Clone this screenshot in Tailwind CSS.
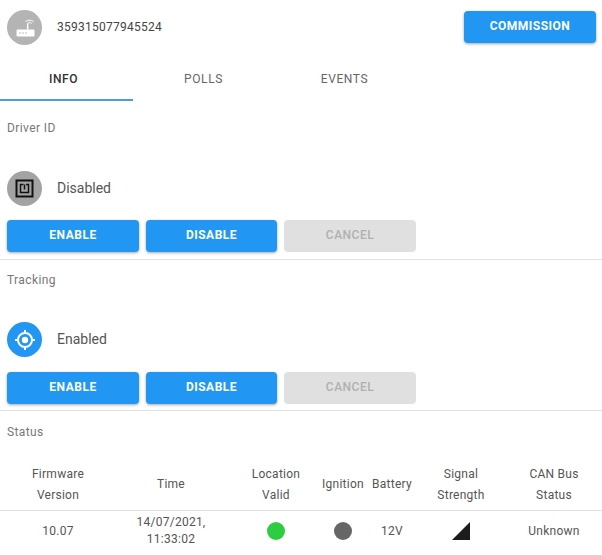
<!DOCTYPE html>
<html lang="en">
<head>
    <meta charset="UTF-8">
    <title>Device</title>
    <script src="https://cdn.jsdelivr.net/npm/@tailwindcss/browser@4"></script>
</head>
<body class="bg-white font-['Roboto',sans-serif] text-[12px] text-[#444] w-[602px] h-[555px] overflow-hidden">
    <!-- header -->
    <div class="flex items-center justify-between h-[54px] pl-[7px] pr-[6px]">
        <div class="flex items-center gap-[15px]">
            <div class="w-[35px] h-[35px] rounded-full bg-[#b4b4b4] flex items-center justify-center">
                <svg width="22" height="22" viewBox="0 0 22 22" fill="none">
                    <path d="M11.5 5.5a5.5 4 0 0 1 8 0" stroke="#fff" stroke-width="1"/>
                    <path d="M13.3 7.3a3 2.2 0 0 1 4.4 0" stroke="#fff" stroke-width="1"/>
                    <rect x="13" y="7.5" width="1.4" height="6" fill="#fff"/>
                    <rect x="2.5" y="13.5" width="18" height="7" rx="1.2" fill="#fff"/>
                    <circle cx="6" cy="17" r=".8" fill="#b4b4b4"/>
                    <circle cx="9" cy="17" r=".8" fill="#b4b4b4"/>
                    <circle cx="12" cy="17" r=".8" fill="#b4b4b4"/>
                </svg>
            </div>
            <span class="text-[12px] tracking-[0.25px]">359315077945524</span>
        </div>
        <button class="w-[132px] h-[32px] pb-[2px] rounded bg-[#2196f3] text-white text-[12px] font-bold tracking-[0.5px] shadow-[0_1px_3px_rgba(0,0,0,0.35)]">COMMISSION</button>
    </div>

    <!-- tabs -->
    <div class="flex h-[47px] pt-[4px] text-[12px] tracking-[0.6px]">
        <div class="w-[133px] pr-[6px] flex items-center justify-center font-medium text-[#333] border-b-2 border-[#4a9fd8]">INFO</div>
        <div class="w-[141px] pb-[2px] flex items-center justify-center text-[#666]">POLLS</div>
        <div class="w-[141px] pb-[2px] flex items-center justify-center text-[#666]">EVENTS</div>
    </div>

    <!-- driver id -->
    <section class="h-[159px] border-b border-[#e2e2e2] px-[7px]">
        <div class="h-[55px] pt-[20px] text-[#777] leading-[15px] tracking-[0.4px]">Driver ID</div>
        <div class="flex items-center gap-[15px] h-[35px] mt-[15px]">
            <div class="w-[35px] h-[35px] rounded-full bg-[#a3a3a3] flex items-center justify-center">
                <svg width="21" height="21" viewBox="0 0 21 21" fill="none" stroke="#111">
                    <rect x="2.5" y="2.5" width="16" height="16" stroke-width="2"/>
                    <path d="M9.5 6.5H6.5V14.5H14.5V6.5H12" stroke-width="1.5"/>
                    <path d="M10.5 6.5V11.5" stroke-width="1.5"/>
                </svg>
            </div>
            <span class="text-[14px] text-[#555]">Disabled</span>
        </div>
        <div class="flex gap-[7px] mt-[14px]">
            <button class="w-[132px] h-[32px] pb-[2px] rounded bg-[#2196f3] text-white font-bold tracking-[0.5px] shadow-[0_1px_3px_rgba(0,0,0,0.35)]">ENABLE</button>
            <button class="w-[131px] h-[32px] pb-[2px] rounded bg-[#2196f3] text-white font-bold tracking-[0.5px] shadow-[0_1px_3px_rgba(0,0,0,0.35)]">DISABLE</button>
            <button class="w-[132px] h-[32px] pb-[2px] rounded bg-[#e0e0e0] text-[#b0b0b0] font-medium tracking-[0.5px]">CANCEL</button>
        </div>
    </section>

    <!-- tracking -->
    <section class="h-[151px] border-b border-[#e2e2e2] px-[7px]">
        <div class="h-[43px] pt-[13px] text-[#777] leading-[15px] tracking-[0.4px]">Tracking</div>
        <div class="flex items-center gap-[15px] h-[35px] mt-[19px]">
            <div class="w-[35px] h-[35px] rounded-full bg-[#2196f3] flex items-center justify-center">
                <svg width="22" height="22" viewBox="0 0 22 22" fill="none" stroke="#fff">
                    <circle cx="11" cy="11" r="7" stroke-width="2"/>
                    <circle cx="11" cy="11" r="3.2" fill="#fff" stroke="none"/>
                    <path d="M11 1v3M11 18v3M1 11h3M18 11h3" stroke-width="2"/>
                </svg>
            </div>
            <span class="text-[14px] text-[#555]">Enabled</span>
        </div>
        <div class="flex gap-[7px] mt-[15px]">
            <button class="w-[132px] h-[32px] pb-[2px] rounded bg-[#2196f3] text-white font-bold tracking-[0.5px] shadow-[0_1px_3px_rgba(0,0,0,0.35)]">ENABLE</button>
            <button class="w-[131px] h-[32px] pb-[2px] rounded bg-[#2196f3] text-white font-bold tracking-[0.5px] shadow-[0_1px_3px_rgba(0,0,0,0.35)]">DISABLE</button>
            <button class="w-[132px] h-[32px] pb-[2px] rounded bg-[#e0e0e0] text-[#b0b0b0] font-medium tracking-[0.5px]">CANCEL</button>
        </div>
    </section>

    <!-- status -->
    <section>
        <div class="h-[42px] pt-[14px] px-[7px] text-[#777] leading-[15px] tracking-[0.4px]">Status</div>
        <div class="grid grid-cols-[116px_110px_92px_50px_48px_90px_1fr] text-center leading-[21px] text-[#555] tracking-[0.25px]">
            <div class="h-[58px] pt-[6px] border-b border-[#e2e2e2] flex items-center justify-center"><span>Firmware<br>Version</span></div>
            <div class="h-[58px] pt-[6px] border-b border-[#e2e2e2] flex items-center justify-center">Time</div>
            <div class="h-[58px] pt-[6px] pl-[8px] border-b border-[#e2e2e2] flex items-center justify-center"><span>Location<br>Valid</span></div>
            <div class="h-[58px] pt-[6px] border-b border-[#e2e2e2] flex items-center justify-center">Ignition</div>
            <div class="h-[58px] pt-[6px] border-b border-[#e2e2e2] flex items-center justify-center">Battery</div>
            <div class="h-[58px] pt-[6px] border-b border-[#e2e2e2] flex items-center justify-center"><span>Signal<br>Strength</span></div>
            <div class="h-[58px] pt-[6px] border-b border-[#e2e2e2] flex items-center justify-center"><span>CAN Bus<br>Status</span></div>
            <div class="h-[40px] flex items-center justify-center">10.07</div>
            <div class="h-[40px] flex items-center justify-center leading-[17px]"><span>14/07/2021,<br>11:33:02</span></div>
            <div class="h-[40px] pl-[8px] flex items-center justify-center"><span class="w-[18px] h-[18px] rounded-full bg-[#2ecc40]"></span></div>
            <div class="h-[40px] flex items-center justify-center"><span class="w-[18px] h-[18px] rounded-full bg-[#666]"></span></div>
            <div class="h-[40px] flex items-center justify-center">12V</div>
            <div class="h-[40px] flex items-center justify-center">
                <svg width="18" height="18" viewBox="0 0 18 18"><path d="M18 0V18H0Z" fill="#1c1c1c"/></svg>
            </div>
            <div class="h-[40px] flex items-center justify-center">Unknown</div>
        </div>
    </section>
</body>
</html>
